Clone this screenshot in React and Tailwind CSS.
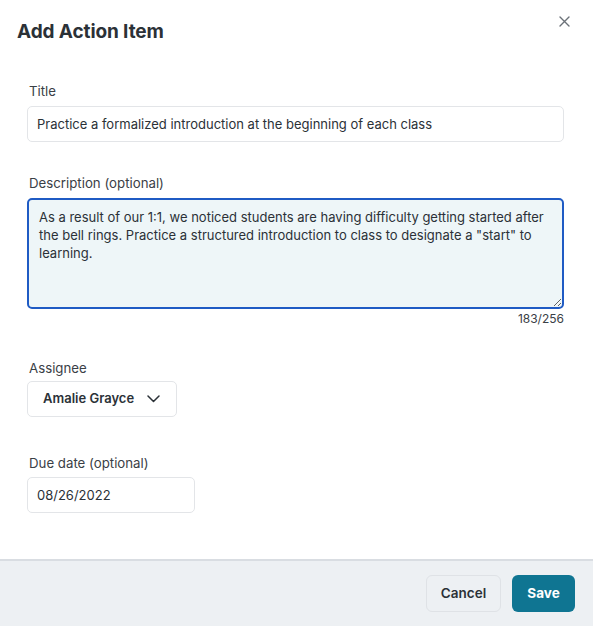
import { useState } from "react";

const font = { fontFamily: "Inter, 'Noto Sans', sans-serif" };

export default function App() {
  const [title, setTitle] = useState(
    "Practice a formalized introduction at the beginning of each class"
  );
  const [desc, setDesc] = useState(
    'As a result of our 1:1, we noticed students are having difficulty getting started after the bell rings. Practice a structured introduction to class to designate a "start" to learning.'
  );
  const [date, setDate] = useState("08/26/2022");

  return (
    <div
      className="relative flex h-[626px] w-full flex-col bg-white text-[#2b3137]"
      style={font}
    >
      {/* close */}
      <button className="absolute right-[22px] top-[14px] flex h-[14px] w-[14px] items-center justify-center text-[#6b7178]">
        <svg width="11" height="11" viewBox="0 0 11 11" fill="none">
          <path
            d="M1 1L10 10M10 1L1 10"
            stroke="currentColor"
            strokeWidth="1.4"
            strokeLinecap="round"
          />
        </svg>
      </button>

      <h1 className="ml-[17px] mt-[20px] text-[19px] font-bold leading-[24px] tracking-[-0.1px]">
        Add Action Item
      </h1>

      <div className="flex flex-1 flex-col pl-[27px] pr-[29px] pt-[37px]">
        <label className="mb-[5px] ml-[2px] block text-[13.25px] leading-[20px] text-[#3a4046]">
          Title
        </label>
        <input
          value={title}
          onChange={(e) => setTitle(e.target.value)}
          style={font}
          className="h-[36px] w-full rounded-[5px] border border-[#e3e5e8] px-[9px] text-[13px] text-[#2b3137] outline-none"
        />

        <label className="mb-[5px] ml-[2px] mt-[31px] block text-[13.25px] leading-[20px] text-[#3a4046]">
          Description (optional)
        </label>
        <textarea
          value={desc}
          onChange={(e) => setDesc(e.target.value)}
          style={font}
          className="h-[111px] w-full resize-y rounded-[5px] border-2 border-[#1f5bc4] bg-[#eef6f8] pb-[4px] pl-[10px] pr-[6px] pt-[8px] text-[13px] leading-[18px] text-[#2b3137] outline-none"
        />
        <div className="mt-[2px] text-right text-[12px] leading-[16px] text-[#3a4046]">
          {desc.length}/256
        </div>

        <label className="mb-[3px] ml-[2px] mt-[31px] block text-[13.25px] leading-[20px] text-[#3a4046]">
          Assignee
        </label>
        <button className="flex h-[36px] w-[150px] items-center justify-between rounded-[5px] border border-[#e3e5e8] pl-[15px] pr-[16px] text-[13px] font-semibold text-[#2b3137]">
          Amalie Grayce
          <svg width="13" height="8" viewBox="0 0 13 8" fill="none">
            <path
              d="M1 1L6.5 6.5L12 1"
              stroke="currentColor"
              strokeWidth="1.5"
              strokeLinecap="round"
              strokeLinejoin="round"
            />
          </svg>
        </button>

        <label className="mb-[4px] ml-[2px] mt-[36px] block text-[13.25px] leading-[20px] text-[#3a4046]">
          Due date (optional)
        </label>
        <input
          value={date}
          onChange={(e) => setDate(e.target.value)}
          style={font}
          className="h-[36px] w-[168px] rounded-[5px] border border-[#e3e5e8] px-[9px] text-[13px] text-[#2b3137] outline-none"
        />
      </div>

      <div className="flex h-[67px] items-center justify-end gap-[11px] border-t-2 border-[#d9dde2] bg-[#edf0f3] pr-[18px]">
        <button className="h-[37px] w-[75px] rounded-[6px] border border-[#dfe2e6] text-[13.5px] font-semibold text-[#2b3137]">
          Cancel
        </button>
        <button className="h-[37px] w-[63px] rounded-[6px] bg-[#0f7592] text-[13.5px] font-bold text-white">
          Save
        </button>
      </div>
    </div>
  );
}
